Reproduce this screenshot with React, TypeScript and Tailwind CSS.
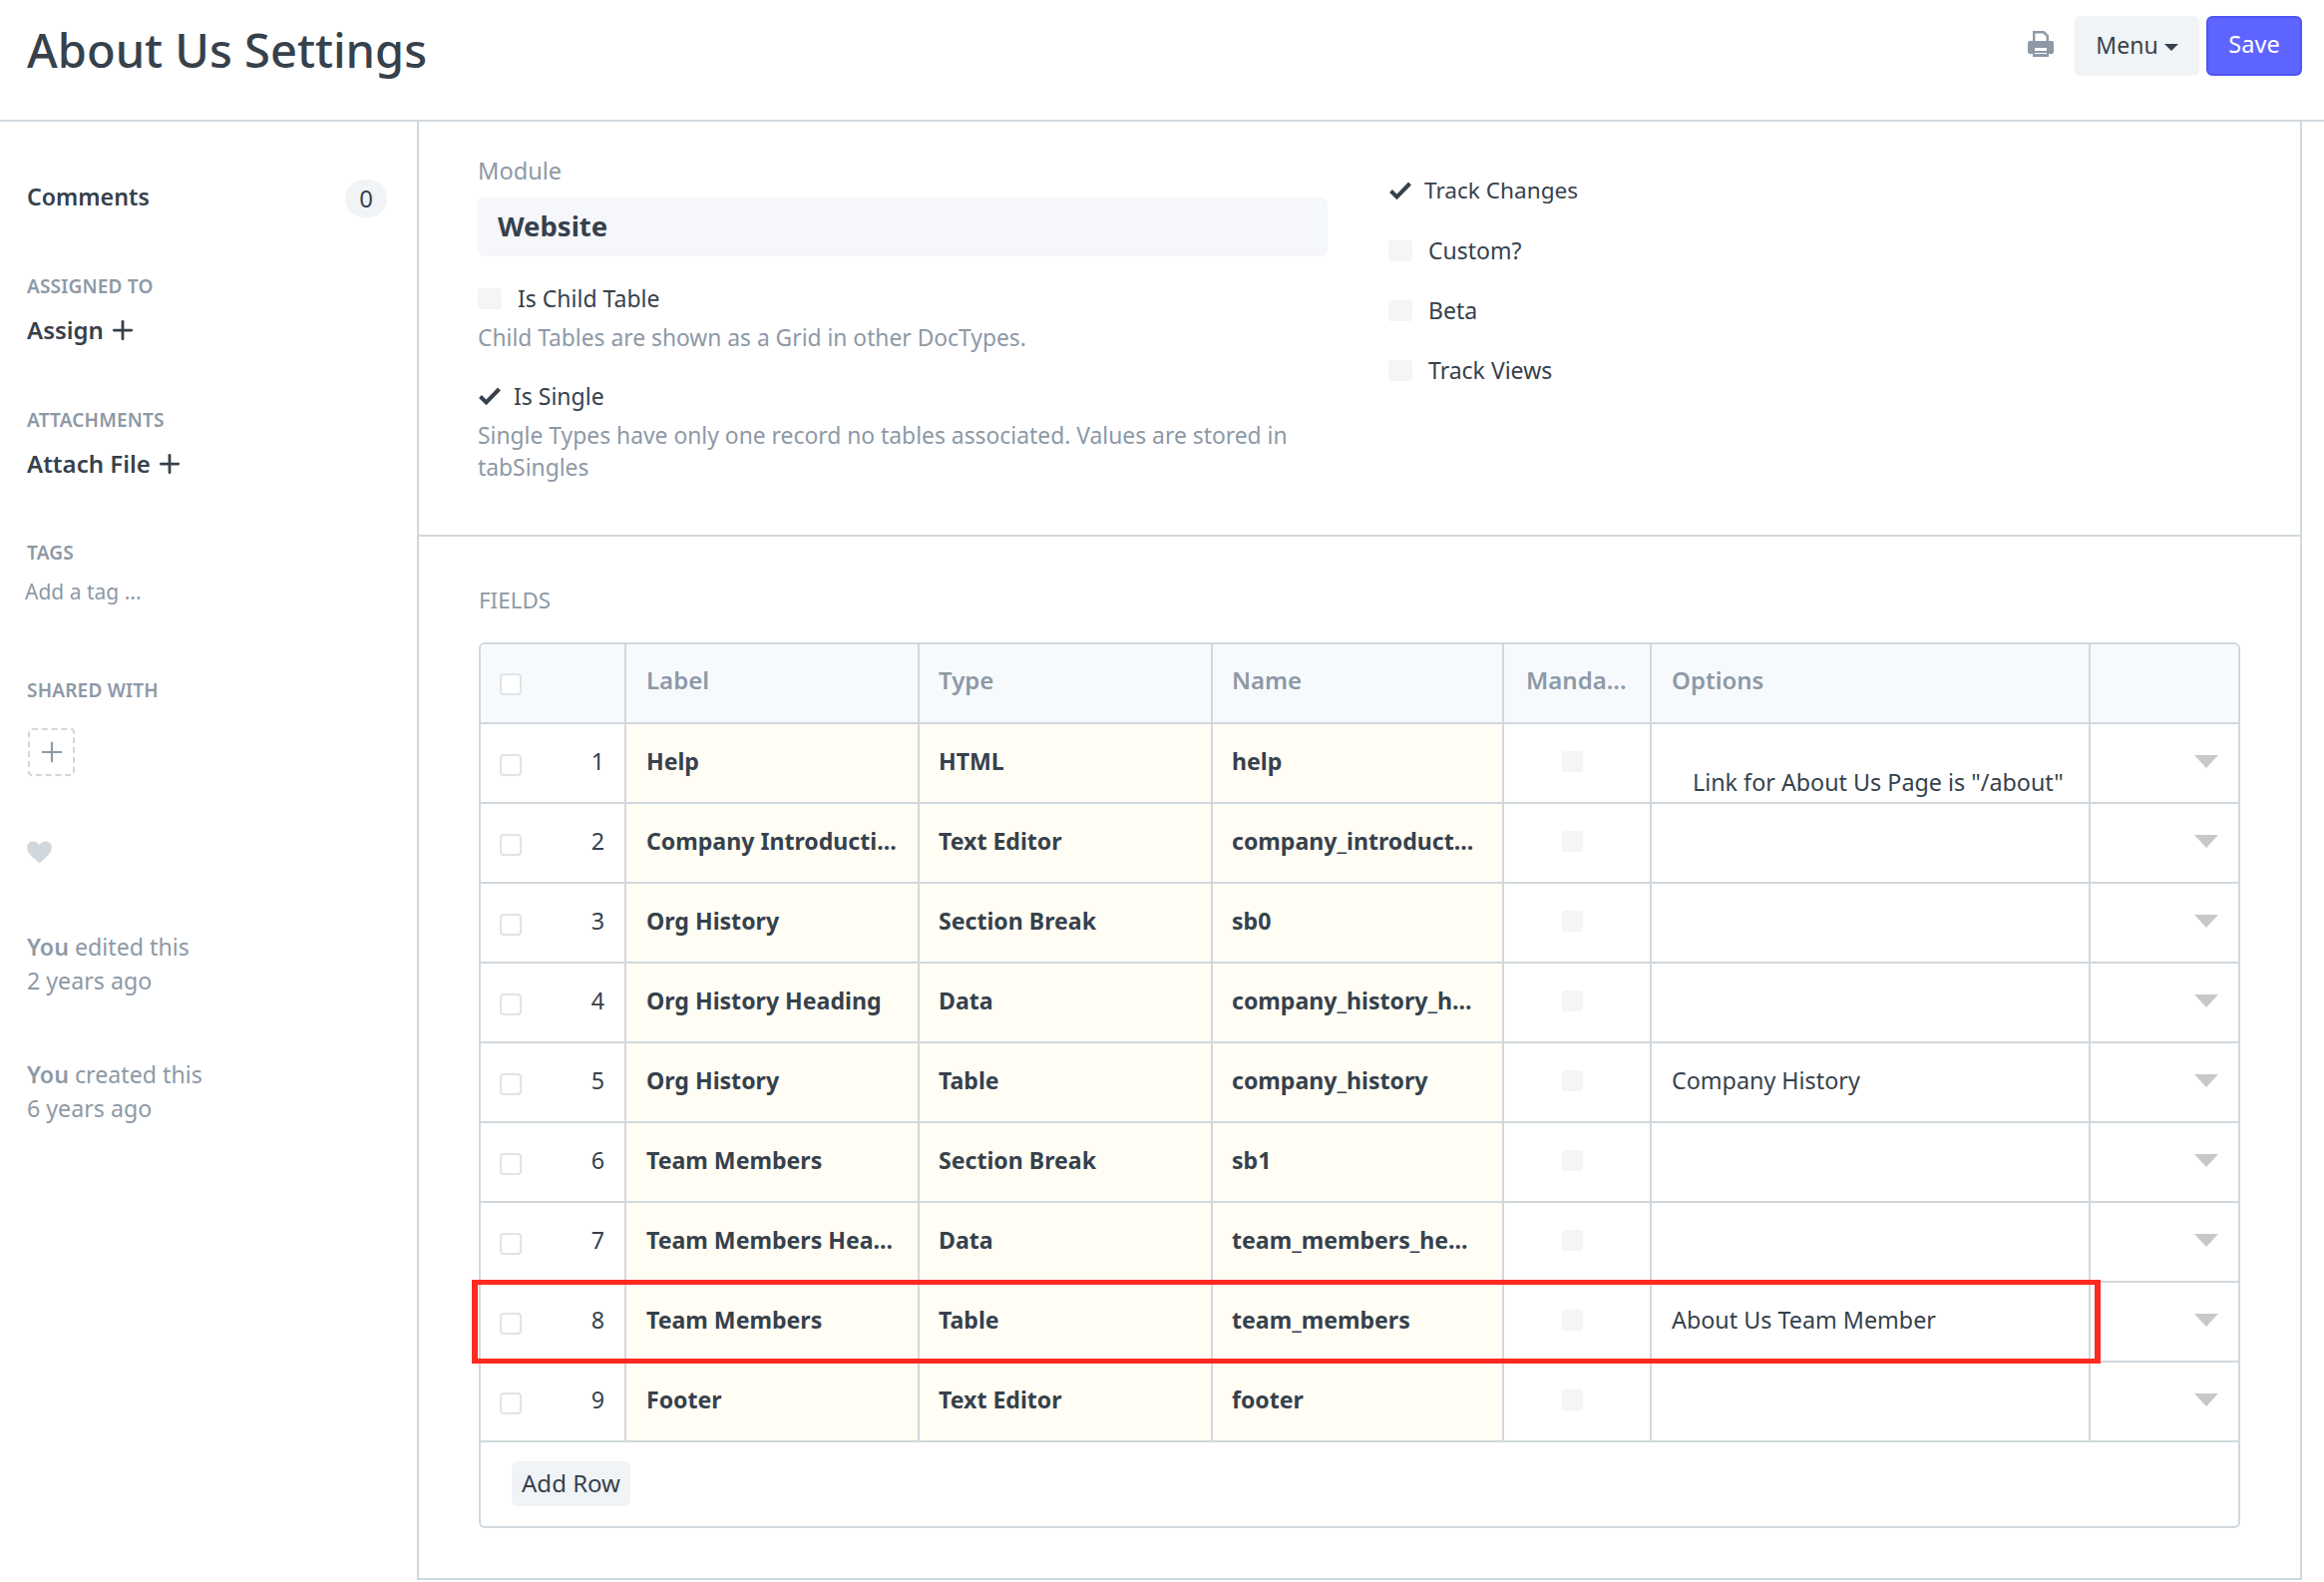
import { Plus } from "lucide-react";

const rows = [
  { no: 1, label: "Help", type: "HTML", name: "help", options: 'Link for About Us Page is "/about"' },
  { no: 2, label: "Company Introducti...", type: "Text Editor", name: "company_introduct...", options: "" },
  { no: 3, label: "Org History", type: "Section Break", name: "sb0", options: "" },
  { no: 4, label: "Org History Heading", type: "Data", name: "company_history_h...", options: "" },
  { no: 5, label: "Org History", type: "Table", name: "company_history", options: "Company History" },
  { no: 6, label: "Team Members", type: "Section Break", name: "sb1", options: "" },
  { no: 7, label: "Team Members Hea...", type: "Data", name: "team_members_he...", options: "" },
  { no: 8, label: "Team Members", type: "Table", name: "team_members", options: "About Us Team Member" },
  { no: 9, label: "Footer", type: "Text Editor", name: "footer", options: "" },
];

const Tick = () => (
  <svg viewBox="0 0 24 20" className="h-[20px] w-[24px] fill-none stroke-[#36414c] stroke-[4]">
    <path d="M2.5 10.5 L8.5 16.5 L21.5 3" />
  </svg>
);

const PrinterIcon = () => (
  <svg viewBox="0 0 26 26" className="mr-[21px] mt-[-4px] h-[26px] w-[26px] text-[#8d99a6]">
    <path d="M6.2 11 V1.3 H16 L19.8 5.1 V11" fill="none" stroke="currentColor" strokeWidth="2.4" />
    <path
      fillRule="evenodd"
      fill="currentColor"
      d="M2 10 H24 Q26 10 26 12 V21 Q26 23 24 23 H21 V26 H5 V23 H2 Q0 23 0 21 V12 Q0 10 2 10 Z M7 17 V23 H19 V17 Z"
    />
    <rect x="7" y="20" width="12" height="2" fill="currentColor" />
  </svg>
);

const HeartIcon = () => (
  <svg viewBox="0 0 24 22" className="mt-[65px] h-[23px] w-[25px] fill-[#d1d8dd]">
    <path d="M12 21.5 C5 15.5 0 11.5 0 6.5 C0 3 2.7 0.5 6 0.5 C8.5 0.5 10.8 1.8 12 4 C13.2 1.8 15.5 0.5 18 0.5 C21.3 0.5 24 3 24 6.5 C24 11.5 19 15.5 12 21.5 Z" />
  </svg>
);

const SectionTitle = ({ text, className }: { text: string; className: string }) => (
  <div className={`h-[24px] text-[19px] font-semibold leading-[24px] tracking-[0.2px] text-[#8d99a6] ${className}`}>{text}</div>
);

const EmptyBox = () => <span className="h-[21px] w-[24px] rounded-[3px] bg-[#f4f5f6]" />;

const RowCheckbox = () => (
  <span className="block h-[22px] w-[22px] rounded-[4px] border-2 border-[#dfe4e8] bg-white" />
);

const Sidebar = () => (
  <aside className="w-[420px] shrink-0 border-r-2 border-[#d1d8dd] pl-[27px] pr-[30px]">
    <div className="mt-[58px] flex h-[38px] items-center justify-between">
      <span className="pb-[4px] text-[23.2px] font-semibold text-[#36414c]">Comments</span>
      <span className="flex h-[38px] w-[42px] items-center justify-center rounded-full bg-[#f0f4f7] text-[24px] text-[#36414c]">
        0
      </span>
    </div>
    <SectionTitle text="ASSIGNED TO" className="mt-[57px]" />
    <div className="mt-[14px] flex h-[36px] items-center gap-[4px] text-[24px] font-semibold text-[#36414c]">
      Assign <Plus size={30} strokeWidth={2.2} />
    </div>
    <SectionTitle text="ATTACHMENTS" className="mt-[60px]" />
    <div className="mt-[14px] flex h-[36px] items-center gap-[4px] text-[24px] font-semibold text-[#36414c]">
      Attach File <Plus size={30} strokeWidth={2.2} />
    </div>
    <SectionTitle text="TAGS" className="mt-[59px]" />
    <div className="ml-[-2px] mt-[11px] h-[32px] text-[21px] leading-[32px] text-[#8d99a6]">Add a tag ...</div>
    <SectionTitle text="SHARED WITH" className="mt-[71px]" />
    <div className="ml-[1px] mt-[26px] flex h-[48px] w-[47px] items-center justify-center rounded-[4px] border-2 border-dashed border-[#d1d8dd]">
      <Plus size={32} strokeWidth={1.6} className="text-[#8d99a6]" />
    </div>
    <HeartIcon />
    <div className="mt-[66px] text-[23.2px] leading-[34px] text-[#8d99a6]">
      <span className="font-semibold">You</span> edited this
      <br />2 years ago
    </div>
    <div className="mt-[60px] text-[23.2px] leading-[34px] text-[#8d99a6]">
      <span className="font-semibold">You</span> created this
      <br />6 years ago
    </div>
  </aside>
);

const FormSection = () => (
  <section className="flex h-[416px] gap-[61px] border-b-2 border-[#d1d8dd] pl-[59px]">
    <div className="w-[852px] pt-[33px]">
      <div className="h-[32px] text-[23.6px] leading-[32px] text-[#8d99a6]">Module</div>
      <div className="mt-[11px] flex h-[59px] items-center rounded-[6px] bg-[#f5f7fa] pb-[2px] pl-[20px] text-[27.5px] font-bold text-[#36414c]">
        Website
      </div>
      <div className="mt-[26px] flex h-[32px] items-center text-[23px] text-[#36414c]">
        <EmptyBox />
        <span className="ml-[16px]">Is Child Table</span>
      </div>
      <div className="mt-[8px] h-[32px] text-[22.8px] leading-[32px] text-[#8d99a6]">
        Child Tables are shown as a Grid in other DocTypes.
      </div>
      <div className="mt-[26px] flex h-[32px] items-center text-[23px] text-[#36414c]">
        <Tick />
        <span className="ml-[12px]">Is Single</span>
      </div>
      <div className="mt-[8px] text-[22.85px] leading-[32px] text-[#8d99a6]">
        Single Types have only one record no tables associated. Values are stored in tabSingles
      </div>
    </div>
    <div className="flex flex-col gap-[28px] pt-[53px] text-[23px] text-[#36414c]">
      <div className="flex h-[32px] items-center">
        <Tick />
        <span className="ml-[12px] text-[22.6px]">Track Changes</span>
      </div>
      {["Custom?", "Beta", "Track Views"].map((label) => (
        <div key={label} className="flex h-[32px] items-center">
          <EmptyBox />
          <span className="ml-[16px]">{label}</span>
        </div>
      ))}
    </div>
  </section>
);

const FieldsTable = () => (
  <div className="mt-[28px] w-[1766px] rounded-[6px] border-2 border-[#d1d8dd] text-[23.3px] text-[#36414c]">
    <div className="flex h-[80px] rounded-t-[6px] border-b-2 border-[#d1d8dd] bg-[#f7fafc] text-[24px] font-semibold text-[#8d99a6]">
      <div className="flex w-[146px] items-center border-r-2 border-[#d1d8dd] pl-[19px] pt-[2px]">
        <RowCheckbox />
      </div>
      <div className="flex w-[294px] items-center border-r-2 border-[#d1d8dd] pb-[6px] pl-[20px]">Label</div>
      <div className="flex w-[294px] items-center border-r-2 border-[#d1d8dd] pb-[6px] pl-[19px]">Type</div>
      <div className="flex w-[292px] items-center border-r-2 border-[#d1d8dd] pb-[6px] pl-[19px]">Name</div>
      <div className="flex w-[148px] items-center border-r-2 border-[#d1d8dd] pb-[6px] pl-[22px]">Manda...</div>
      <div className="flex w-[440px] items-center border-r-2 border-[#d1d8dd] pb-[6px] pl-[20px]">Options</div>
      <div className="flex-1" />
    </div>
    {rows.map((row) => (
      <div key={row.no} className="relative flex h-[80px] border-b-2 border-[#d1d8dd]">
        <div className="flex w-[146px] items-center justify-between border-r-2 border-[#d1d8dd] pl-[19px] pr-[20px]">
          <span className="mt-[4px]">
            <RowCheckbox />
          </span>
          <span className="pb-[4px]">{row.no}</span>
        </div>
        <div className="flex w-[294px] items-center border-r-2 border-[#d1d8dd] bg-[#fffdf4] pb-[4px] pl-[20px] text-[23.1px] font-bold">
          {row.label}
        </div>
        <div className="flex w-[294px] items-center border-r-2 border-[#d1d8dd] bg-[#fffdf4] pb-[4px] pl-[19px] text-[23.1px] font-bold">
          {row.type}
        </div>
        <div className="flex w-[292px] items-center border-r-2 border-[#d1d8dd] bg-[#fffdf4] pb-[4px] pl-[19px] text-[23.1px] font-bold">
          {row.name}
        </div>
        <div className="flex w-[148px] items-center border-r-2 border-[#d1d8dd] pb-[3px] pl-[58px]">
          <span className="h-[21px] w-[21px] rounded-[3px] bg-[#f4f5f6]" />
        </div>
        {row.no === 1 ? (
          <div className="flex w-[440px] items-center border-r-2 border-[#d1d8dd] pl-[41px] pt-[38px]">{row.options}</div>
        ) : (
          <div className="flex w-[440px] items-center border-r-2 border-[#d1d8dd] pb-[4px] pl-[20px]">{row.options}</div>
        )}
        <div className="flex flex-1 items-center justify-end pb-[3px] pr-[20px]">
          <span className="h-0 w-0 border-x-[12px] border-t-[13px] border-x-transparent border-t-[#c8c8c8]" />
        </div>
        {row.no === 8 && (
          <div className="pointer-events-none absolute left-[-9px] right-[138px] top-[-3px] z-10 h-[84px] border-x-[6px] border-y-[5px] border-[#ff2a1f]" />
        )}
      </div>
    ))}
    <div className="flex h-[84px] items-start pl-[31px] pt-[19px]">
      <button className="h-[45px] w-[119px] rounded-[6px] bg-[#f0f4f7] pb-[2px] text-[24px] text-[#36414c]">Add Row</button>
    </div>
  </div>
);

export default function App() {
  return (
    <div className="min-h-[1586px] bg-white font-['Noto_Sans',sans-serif]">
      <header className="flex h-[122px] items-start justify-between border-b-2 border-[#d1d8dd] pl-[27px] pr-[22px]">
        <h1 className="mt-[20px] text-[47px] font-medium leading-[60px] text-[#36414c]">About Us Settings</h1>
        <div className="mt-[16px] flex items-center">
          <PrinterIcon />
          <button className="flex h-[60px] w-[125px] items-center justify-center gap-[6px] rounded-[6px] bg-[#f0f4f7] pb-[2px] text-[23px] text-[#36414c]">
            Menu
            <span className="mt-[4px] h-0 w-0 border-x-[7px] border-t-[7px] border-x-transparent border-t-[#36414c]" />
          </button>
          <button className="ml-[7px] h-[60px] w-[96px] rounded-[6px] border-2 border-[#4e55f5] bg-[#5e64ff] pb-[2px] text-[23.5px] text-white">
            Save
          </button>
        </div>
      </header>
      <div className="flex">
        <Sidebar />
        <main className="w-[1888px] border-r-2 border-[#d1d8dd]">
          <FormSection />
          <section className="border-b-2 border-[#d1d8dd] pb-[50px] pl-[60px] pt-[50px]">
            <div className="h-[28px] text-[22.4px] leading-[28px] text-[#8d99a6]">FIELDS</div>
            <FieldsTable />
          </section>
        </main>
      </div>
    </div>
  );
}
